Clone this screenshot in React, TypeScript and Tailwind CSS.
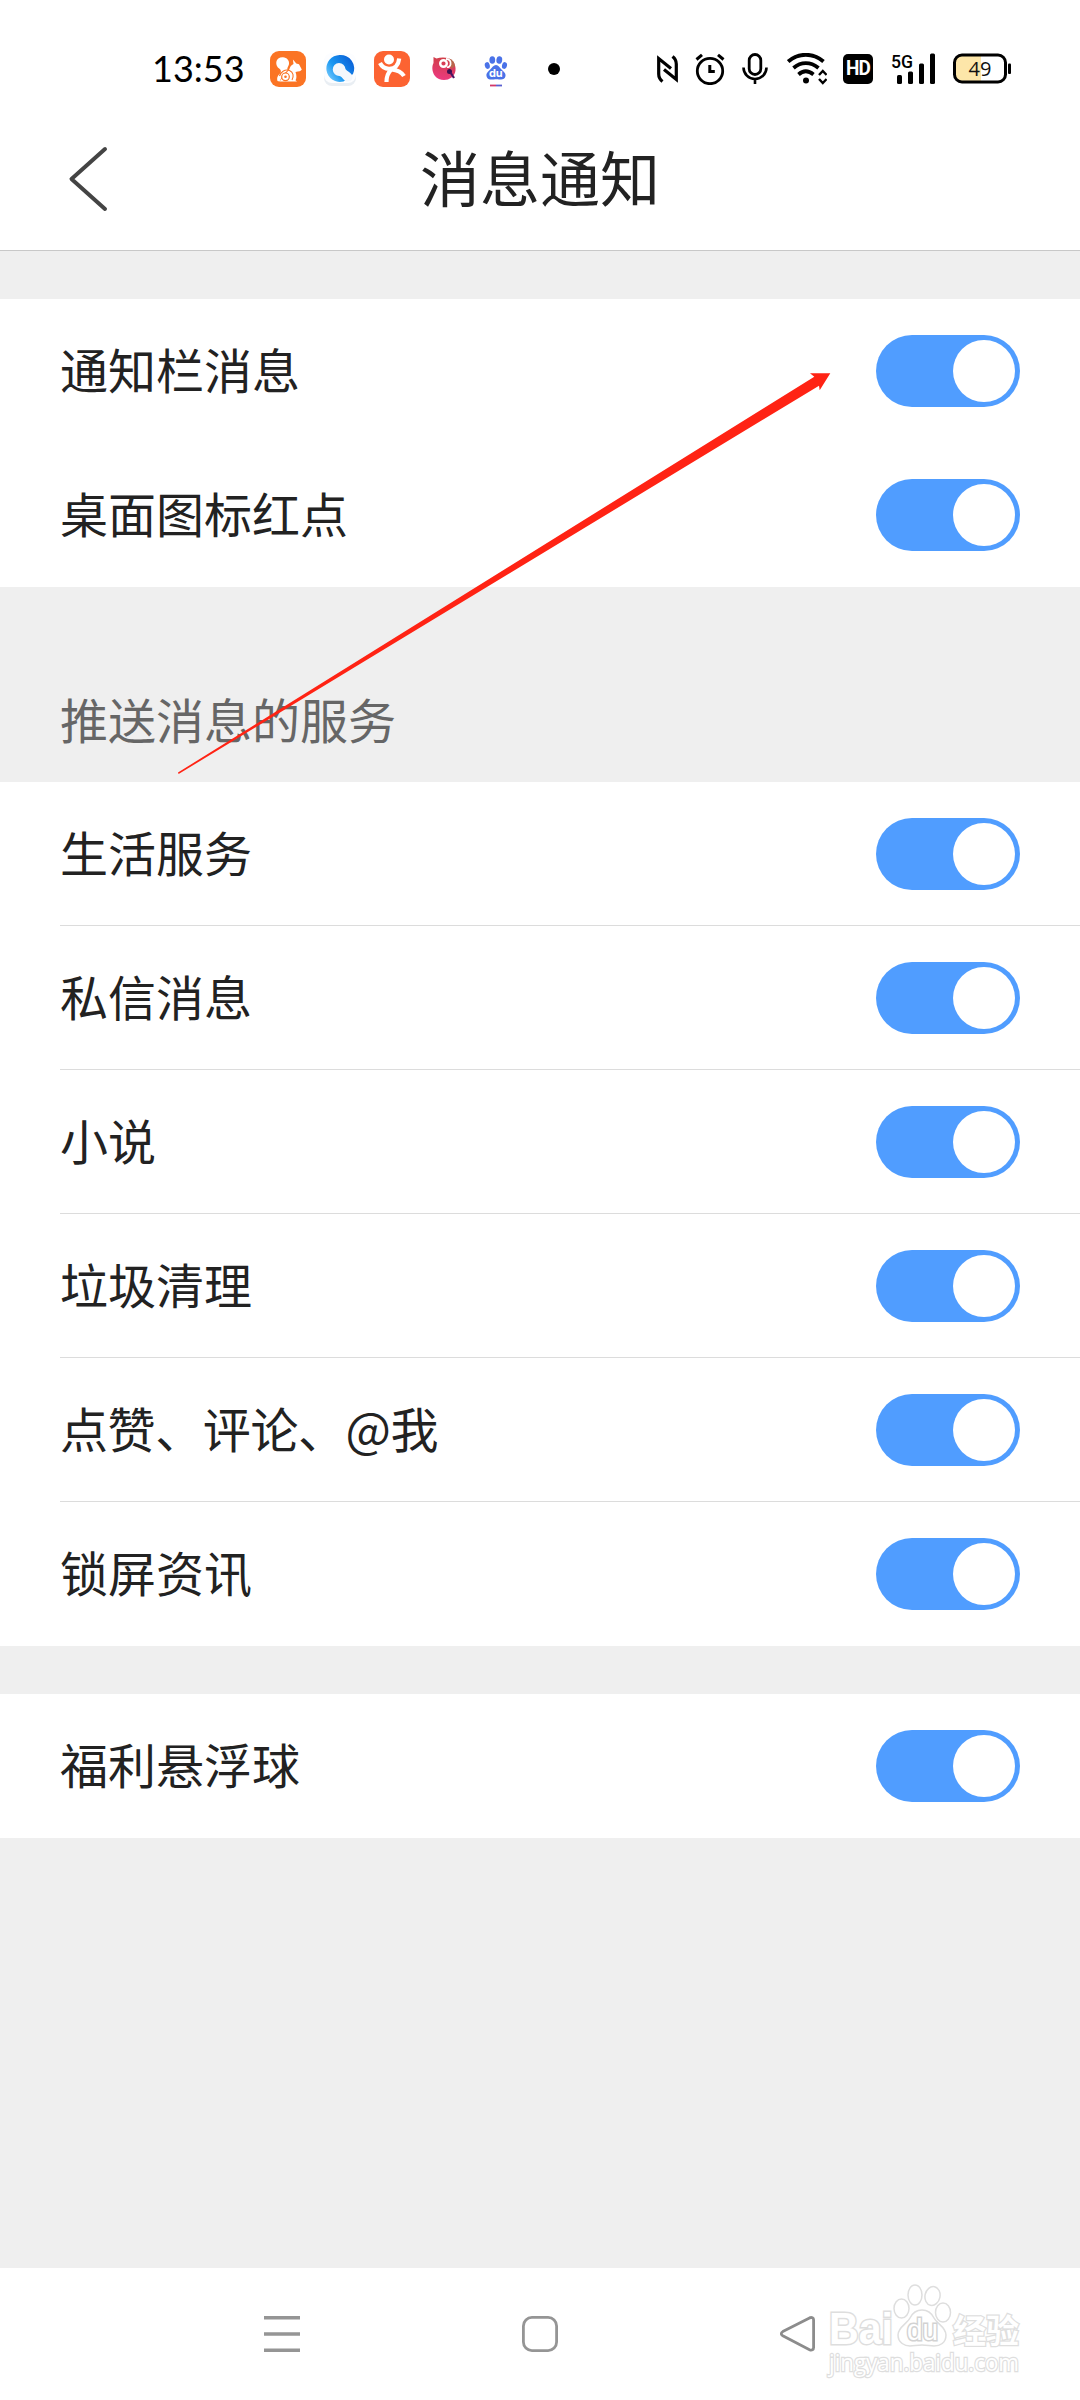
import { useState } from "react";

type Item = { id: string; label: string };

const GENERAL: Item[] = [
  { id: "bar", label: "通知栏消息" },
  { id: "dot", label: "桌面图标红点" },
];

const SERVICES: Item[] = [
  { id: "life", label: "生活服务" },
  { id: "dm", label: "私信消息" },
  { id: "novel", label: "小说" },
  { id: "clean", label: "垃圾清理" },
  { id: "social", label: "点赞、评论、@我" },
  { id: "lock", label: "锁屏资讯" },
];

const BONUS: Item[] = [{ id: "ball", label: "福利悬浮球" }];

function Toggle({ on, onClick }: { on: boolean; onClick: () => void }) {
  return (
    <button
      role="switch"
      aria-checked={on}
      onClick={onClick}
      className={`flex h-[72px] w-36 shrink-0 items-center rounded-full px-[5px] ${
        on ? "justify-end bg-[#509dff]" : "justify-start bg-[#d8d8d8]"
      }`}
    >
      <span className="size-[62px] rounded-full bg-white" />
    </button>
  );
}

function Group({ items, divided }: { items: Item[]; divided?: boolean }) {
  const [off, setOff] = useState<Set<string>>(new Set());

  function flip(id: string) {
    setOff(s => {
      const n = new Set(s);
      if (n.has(id)) n.delete(id); else n.add(id);
      return n;
    });
  }

  return (
    <div className="bg-white pl-[60px]">
      {items.map((it, i) => (
        <div
          key={it.id}
          className={`flex h-36 items-center justify-between pr-[60px] ${
            divided && i < items.length - 1 ? "border-b border-[#dcdcdc]" : ""
          }`}
        >
          <span className={`pb-[6px] text-5xl leading-none text-[#222] ${it.id === "social" ? "tracking-[-0.4px]" : ""}`}>
            {it.label}
          </span>
          <Toggle on={!off.has(it.id)} onClick={() => flip(it.id)} />
        </div>
      ))}
    </div>
  );
}

function SquirrelIcon() {
  return (
    <svg width="36" height="36" viewBox="0 0 36 36">
      <rect width="36" height="36" rx="9" fill="#fb7424" />
      <path
        d="M7.500 30C6.500 26.500 8 24.500 10 22.500c1.500-1.700 1-3.500-.5-4.700C7 16 6 14 6.300 11 6.800 8 9.500 6 13 6.200c4 .3 6.500 3.300 6 6.800-.3 2.500-2.200 3.200-1.500 6.500L13 23.500l-3.500 7z"
        fill="#fff"
      />
      <path d="M19.300 18.500c.7-2.700 2-4.500 4.200-5.500l-.6-4.500 3.400 4 2.700.8 2.800 5.200c-.8 2-3 1.600-6.300 2.500 1.300 3.500 1.200 6.300 0 8.300l1.500 1.200H9.500z" fill="#fff" />
      <path d="M9.500 25c1.500-4.500 5.500-7 10-5.500 4 1.500 4.500 6 2.500 9.500" fill="none" stroke="#fb7424" strokeWidth="1.100" />
      <circle cx="15.500" cy="25.800" r="3.800" fill="#fff" stroke="#fb7424" strokeWidth="1.200" />
      <circle cx="15.500" cy="25.800" r="1.300" fill="#fb7424" />
    </svg>
  );
}

function QBrowserIcon() {
  return (
    <svg width="36" height="36" viewBox="0 0 36 36">
      <defs>
        <linearGradient id="qb" x1="0" y1="1" x2="1" y2="0.300">
          <stop offset="0" stopColor="#8ed8ff" />
          <stop offset="0.450" stopColor="#1a98f2" />
          <stop offset="1" stopColor="#0a62d8" />
        </linearGradient>
      </defs>
      <rect x="2" y="4" width="32" height="31" rx="8" fill="#e9eef3" />
      <rect x="2" y="2" width="32" height="30" rx="8" fill="#fcfdff" />
      <path d="M17.500 4a13.500 13.500 0 1 0 4 26.500L31 23A13.500 13.500 0 0 0 17.500 4z" fill="url(#qb)" />
      <path d="M17 12a6.500 6.500 0 0 1 6.500 6c.5 1.500 4 2.500 6.500 6 1.500 3.500-.5 6.500-4 6.500-4.500 0-5-4.500-8.500-5.500A6.500 6.500 0 0 1 17 12z" fill="#f3f7fc" />
    </svg>
  );
}

function RunnerIcon() {
  return (
    <svg width="36" height="36" viewBox="0 0 36 36">
      <rect width="36" height="36" rx="9" fill="#fc6332" />
      <circle cx="15" cy="8.500" r="5" fill="#fff" />
      <path
        d="M6 12c2 4 5 6 9.500 5.800 5.500 0 9-4 9.700-10.300M12.500 31c0-5 1.500-9.500 5-12.500 5 .5 10 2.500 12.500 6.500"
        fill="none"
        stroke="#fff"
        strokeWidth="4.200"
      />
    </svg>
  );
}

function PinkIcon() {
  return (
    <svg width="26" height="26" viewBox="0 0 26 26">
      <defs>
        <linearGradient id="pk" x1="0.600" y1="0" x2="0.400" y2="1">
          <stop offset="0" stopColor="#cf3f45" />
          <stop offset="1" stopColor="#ec3a80" />
        </linearGradient>
      </defs>
      <path d="M2.500 1l3 1.500C11 .5 19 1 22.500 6c3.500 6 2.500 12-2 15.500-5 4-13 3-16.500-1.500C.5 15 1 10 2.500 7z" fill="url(#pk)" />
      <path d="M18 2.500c3.500 1 5.500 3.500 6 7.500l-4 3z" fill="#b8674c" />
      <circle cx="12.500" cy="7.500" r="3.300" fill="none" stroke="#fff" strokeWidth="2.400" />
      <path d="M15 3c4 0 5 3 4.500 5.500-.5 2-2 3-3.500 2.500" fill="none" stroke="#fff" strokeWidth="1.800" />
      <circle cx="18.500" cy="15.500" r="2.500" fill="#3a1050" />
      <path d="M19.500 16.500l3.500 5.500" stroke="#4a1460" strokeWidth="2.200" />
    </svg>
  );
}

function PawIcon() {
  return (
    <svg width="24" height="34" viewBox="0 0 24 34">
      <g fill="#4a72e8">
        <ellipse cx="3.300" cy="11.500" rx="2.500" ry="3.400" transform="rotate(-12 3.300 11.500)" />
        <ellipse cx="8.300" cy="6" rx="2.900" ry="3.800" />
        <ellipse cx="15.300" cy="6" rx="2.900" ry="3.800" transform="rotate(8 15.300 6)" />
        <ellipse cx="20.500" cy="11.500" rx="2.500" ry="3.400" transform="rotate(12 20.500 11.500)" />
        <path d="M12 11c2.500 0 3.500 2.500 5.500 4.500s4.500 3.500 4 6.500-3 3.800-5.300 3.500-2.700-.3-4.200-.3-2.400.3-4.500.3S3 25 2.500 22s1.700-4.500 3.700-6.500S9.500 11 12 11z" />
      </g>
      <text x="11.800" y="23" textAnchor="middle" fontSize="11" fontWeight="700" fill="#fff" className="font-['Inter',sans-serif]">du</text>
      <path d="M6 31.500h6" stroke="#d2386a" strokeWidth="1.800" />
      <path d="M12 31.500h6" stroke="#5a5fd0" strokeWidth="1.800" />
    </svg>
  );
}

function NfcIcon() {
  return (
    <svg className="overflow-visible" width="21" height="28" viewBox="0 0 21 28" fill="none" stroke="#000" strokeWidth="3.200">
      <path d="M5.500 26.500C3 24.500 1.700 22.500 1.700 19V3.500L14 13.500" />
      <path d="M15.500 1.500c2.500 2 3.800 4 3.800 7.500v15.500L7 14.500" />
    </svg>
  );
}

function AlarmIcon() {
  return (
    <svg width="30" height="32" viewBox="0 0 30 32" fill="none" stroke="#000">
      <circle cx="15" cy="18" r="12.700" strokeWidth="2.800" />
      <path d="M1.500 6.500L7 1.800M28.500 6.500L23 1.800" strokeWidth="3" />
      <path d="M14.800 12v6.500h5" strokeWidth="3" />
    </svg>
  );
}

function MicIcon() {
  return (
    <svg width="26" height="31" viewBox="0 0 26 31" fill="none" stroke="#000">
      <rect x="7.200" y="1.500" width="11.600" height="20" rx="5.800" strokeWidth="2.800" />
      <path d="M1.500 14.500a11.500 11.500 0 0 0 23 0M13 26v5" strokeWidth="2.600" />
    </svg>
  );
}

function WifiIcon() {
  return (
    <svg width="40" height="32" viewBox="0 0 40 32" fill="none" stroke="#000">
      <path d="M1.200 8.500C11.500-.5 26-.5 36.500 8.500" strokeWidth="3.800" />
      <path d="M6.500 15C14 8.500 23.500 8.500 31.500 15" strokeWidth="3.800" />
      <path d="M11.500 21.500c4.500-4 10-4 15 0" strokeWidth="3.800" />
      <circle cx="19" cy="27.500" r="3" fill="#000" stroke="none" />
      <path d="M32 22l3.800-4 3.800 4M32 26l3.800 4 3.800-4" strokeWidth="2.400" />
    </svg>
  );
}

function SignalIcon() {
  return (
    <svg className="overflow-visible" width="46" height="31" viewBox="0 0 46 31">
      <text x="0" y="14.600" fontSize="19" fontWeight="500" textLength="22" lengthAdjust="spacingAndGlyphs" className="font-['Roboto',sans-serif]">5G</text>
      <rect x="6" y="22" width="5" height="9" rx="1.500" />
      <rect x="17" y="18.500" width="5" height="12.500" rx="1.500" />
      <rect x="28" y="10.500" width="5" height="20.500" rx="1.500" />
      <rect x="39" y="0.500" width="5" height="30.500" rx="1.500" />
    </svg>
  );
}

function BatteryIcon() {
  return (
    <svg width="60" height="31" viewBox="0 0 60 31">
      <rect x="1.500" y="2" width="51" height="27" rx="7.500" fill="#fff" />
      <path d="M9 2h19v27H9a7.500 7.500 0 0 1-7.500-7.500v-12A7.500 7.500 0 0 1 9 2z" fill="#fde6a9" />
      <rect x="1.500" y="2" width="51" height="27" rx="7.500" fill="none" stroke="#000" strokeWidth="3" />
      <rect x="55" y="10.500" width="3" height="10.500" rx="1" />
      <text x="27" y="22.500" textAnchor="middle" fontSize="20" fill="#111" className="font-['Open_Sans',sans-serif]">49</text>
    </svg>
  );
}

function StatusBar() {
  return (
    <div className="flex h-[110px] items-center pt-[27px] pr-[67px] pl-[151px]">
      <span className="w-[119px] pb-0.5 pl-px font-['Lato',sans-serif] text-4xl leading-none text-black">13:53</span>
      <SquirrelIcon />
      <div className="ml-4"><QBrowserIcon /></div>
      <div className="ml-4"><RunnerIcon /></div>
      <div className="ml-[21px]"><PinkIcon /></div>
      <div className="mt-1 ml-[27px]"><PawIcon /></div>
      <span className="ml-10 size-3 rounded-full bg-black" />
      <div className="ml-auto flex items-center">
        <NfcIcon />
        <div className="ml-[17px]"><AlarmIcon /></div>
        <div className="ml-[17px]"><MicIcon /></div>
        <div className="ml-[19px]"><WifiIcon /></div>
        <span className="ml-4 flex size-[30px] items-center justify-center rounded-[5px] bg-black font-['Roboto',sans-serif] text-[19px] font-bold tracking-[-1px] text-white">
          <span className="inline-block scale-y-110">HD</span>
        </span>
        <div className="ml-[18px]"><SignalIcon /></div>
        <div className="ml-4"><BatteryIcon /></div>
      </div>
    </div>
  );
}

function Watermark() {
  return (
    <svg className="overflow-visible" width="200" height="110" viewBox="0 0 200 110" fill="#fff" stroke="#dedede" strokeWidth="1.500">
      <text x="4" y="62" fontSize="44" fontWeight="700" textLength="64" lengthAdjust="spacingAndGlyphs" strokeWidth="3" className="font-['Liberation_Sans',sans-serif] [paint-order:stroke]">Bai</text>
      <ellipse cx="76.500" cy="26.500" rx="7.500" ry="9.500" />
      <ellipse cx="90" cy="13" rx="7" ry="10" />
      <ellipse cx="107.500" cy="14" rx="7.500" ry="9.500" transform="rotate(12 107.500 14)" />
      <ellipse cx="118" cy="30.500" rx="7.500" ry="9.500" />
      <path d="M97 28c7 0 10 4 12 8 3 6 12 9 12 17 0 8-6 11-12 11-4 0-7-1-12-1s-8 1-12 1c-5 0-12-3-12-11 0-8 9-11 12-17 2-4 5-8 12-8z" />
      <text x="82" y="57.500" fontSize="29" textLength="31" lengthAdjust="spacingAndGlyphs" strokeWidth="3" stroke="#d2d2d2" className="font-['Liberation_Sans',sans-serif] [paint-order:stroke]">du</text>
      <text x="128" y="60.500" fontSize="33" fontWeight="700" textLength="66" lengthAdjust="spacingAndGlyphs" strokeWidth="2.500" className="font-['Noto_Sans_CJK_SC',sans-serif] [paint-order:stroke]">经验</text>
      <text x="4" y="88.500" fontSize="24" textLength="190" lengthAdjust="spacingAndGlyphs" strokeWidth="2.500" className="font-['Open_Sans',sans-serif] [paint-order:stroke]">jingyan.baidu.com</text>
    </svg>
  );
}

function NavBar() {
  return (
    <div className="flex h-[132px] items-center bg-white pl-[264px]">
      <svg width="36" height="36" viewBox="0 0 36 36" stroke="#959595" strokeWidth="3.400">
        <path d="M0 1.700h36M0 18h36M0 34.300h36" />
      </svg>
      <svg className="ml-[222px]" width="36" height="36" viewBox="0 0 36 36" fill="none" stroke="#959595" strokeWidth="2.800">
        <rect x="1.400" y="1.400" width="33.200" height="33.200" rx="8.500" />
      </svg>
      <svg className="ml-[222px]" width="36" height="36" viewBox="0 0 36 36" fill="none" stroke="#8c8c8c" strokeWidth="2.800">
        <path d="M2.800 15.600L29.500 1.900c2.300-1 4.100.1 4.100 2.100v27.500c0 2.200-1.800 3.200-4.100 2.200L2.800 19.800c-2-1.200-2-3 0-4.200z" />
      </svg>
      <div className="ml-[9px] self-start pt-[14px]"><Watermark /></div>
    </div>
  );
}

export default function App() {
  return (
    <div className="relative flex h-[2400px] w-[1080px] flex-col bg-[#efefef] font-['Noto_Sans_CJK_SC',sans-serif]">
      <div className="bg-white">
        <StatusBar />
        <header className="flex h-[141px] items-center border-b border-[#c8c8c8] px-[68px] pb-[2px]">
          <svg width="42" height="68" viewBox="0 0 42 68" fill="none" stroke="#444" strokeWidth="4" strokeLinecap="round" strokeLinejoin="round">
            <path d="M37 4L3.500 34 37 64" />
          </svg>
          <h1 className="flex-1 pr-[42px] pb-[6px] text-center text-6xl leading-none text-[#222]">消息通知</h1>
        </header>
      </div>

      <div className="h-12" />
      <Group items={GENERAL} />
      <div className="flex h-[195px] items-end pb-10 pl-[60px]">
        <h2 className="text-5xl leading-none text-[#666]">推送消息的服务</h2>
      </div>
      <Group items={SERVICES} divided />
      <div className="h-12" />
      <Group items={BONUS} />

      <div className="flex-1" />
      <NavBar />

      {/* pointer to the first switch */}
      <svg className="pointer-events-none absolute top-[360px] left-[170px]" width="670" height="420" viewBox="170 360 670 420">
        <path d="M178 772.500L814.300 376.700 810 373.300h20.300L819.700 390.300 819 385.700 178.600 774z" fill="#ff2314" />
      </svg>
    </div>
  );
}
